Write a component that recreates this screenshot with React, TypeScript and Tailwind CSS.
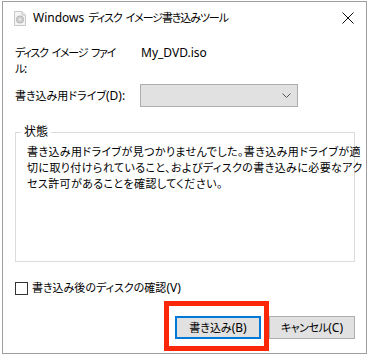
import React from "react";

const font = "[font-family:'Noto_Sans','Noto_Sans_CJK_JP',sans-serif] [font-feature-settings:'palt']";

function L({ children }: { children: React.ReactNode }) {
  return <span className="text-[12px] tracking-normal">{children}</span>;
}

function Sp() {
  return <span className="inline-block w-[4px]"> </span>;
}

function DiscIcon() {
  return (
    <svg width="12" height="15" viewBox="0 0 12 15" className="shrink-0">
      <path d="M0.5 0.5 H8 L11.5 4 V14.5 H0.5 Z" fill="#f4f4f4" stroke="#c8c8c8" />
      <path d="M8 0.5 V4 H11.5" fill="#e6e6e6" stroke="#c8c8c8" />
      <circle cx="6" cy="8.5" r="3.6" fill="#cfcfcf" stroke="#a9a9a9" strokeWidth="0.8" />
      <circle cx="6" cy="8.5" r="1" fill="#f4f4f4" />
    </svg>
  );
}

export default function App() {
  return (
    <div className={`w-[369px] h-[356px] bg-white text-black text-[11px] ${font}`}>
      <div className="ml-[2px] mt-[1px] w-[365px] h-[353px] border border-[#9e9e9e] bg-white flex flex-col">
        {/* title bar */}
        <div className="h-[32px] flex items-center pl-[11px] pr-[8px]">
          <DiscIcon />
          <span className="ml-[7px] leading-[16px] whitespace-nowrap tracking-[-1.1px]">
            <L>Windows</L>
            <Sp />
            ディスク
            <Sp />
            イメージ書き込みツール
          </span>
          <div className="ml-auto w-[14px] h-[14px] flex items-center justify-center mr-[3px]">
            <svg width="12" height="12" viewBox="0 0 12 12">
              <path d="M0.5 0.5 L11.5 11.5 M11.5 0.5 L0.5 11.5" stroke="#111" strokeWidth="1" />
            </svg>
          </div>
        </div>

        <div className="flex flex-col pl-[12px] pr-[11px]">
          {/* image file row */}
          <div className="mt-[11px] flex leading-[16px]">
            <div className="w-[126px] tracking-[-1.3px] whitespace-nowrap">
              ディスク
              <Sp />
              イメージ
              <Sp />
              ファイ
              <br />
              ル<L>:</L>
            </div>
            <div className="whitespace-nowrap">
              <L>My_DVD.iso</L>
            </div>
          </div>

          {/* drive row */}
          <div className="mt-[7px] flex items-center leading-[16px]">
            <div className="w-[125px] whitespace-nowrap">
              書き込み用ドライブ<L>(D):</L>
            </div>
            <div className="w-[158px] h-[23px] border border-[#adadad] bg-[#e1e1e1] flex items-center justify-end pr-[6px]">
              <svg width="9" height="5" viewBox="0 0 9 5">
                <path d="M0.5 0.5 L4.5 4.5 L8.5 0.5" fill="none" stroke="#555" strokeWidth="1" />
              </svg>
            </div>
          </div>

          {/* status group */}
          <div className="relative mt-[25px] w-[340px] h-[130px] border border-[#dcdcdc] pt-[11px] pl-[11px]">
            <span className="absolute left-[5px] -top-[9px] bg-white px-[3px] text-[12px] leading-[16px]">
              状態
            </span>
            <p className="leading-[16px] whitespace-nowrap tracking-[0.4px]">
              書き込み用ドライブが見つかりませんでした。書き込み用ドライブが適
              <br />
              切に取り付けられていること、およびディスクの書き込みに必要なアク
              <br />
              セス許可があることを確認してください。
            </p>
          </div>

          {/* checkbox */}
          <div className="mt-[18px] flex items-center">
            <div className="w-[13px] h-[13px] border border-[#333] bg-white" />
            <span className="ml-[4px] leading-[16px] whitespace-nowrap">
              書き込み後のディスクの確認<L>(V)</L>
            </span>
          </div>

          {/* buttons */}
          <div className="mt-[20px] flex justify-end gap-[8px]">
            <div className="relative">
              <div className="absolute -left-[11px] -top-[15px] w-[105px] h-[50px] border-[5px] border-[#fa2808]" />
              <button className="w-[86px] h-[23px] border-2 border-[#0078d7] bg-[#e1e1e1] leading-[16px] flex items-center justify-center">
                <span>
                  書き込み<L>(B)</L>
                </span>
              </button>
            </div>
            <button className="w-[86px] h-[23px] border border-[#adadad] bg-[#e1e1e1] leading-[16px] flex items-center justify-center">
              <span className="tracking-[-0.5px]">
                キャンセル<L>(C)</L>
              </span>
            </button>
          </div>
        </div>
      </div>
    </div>
  );
}
